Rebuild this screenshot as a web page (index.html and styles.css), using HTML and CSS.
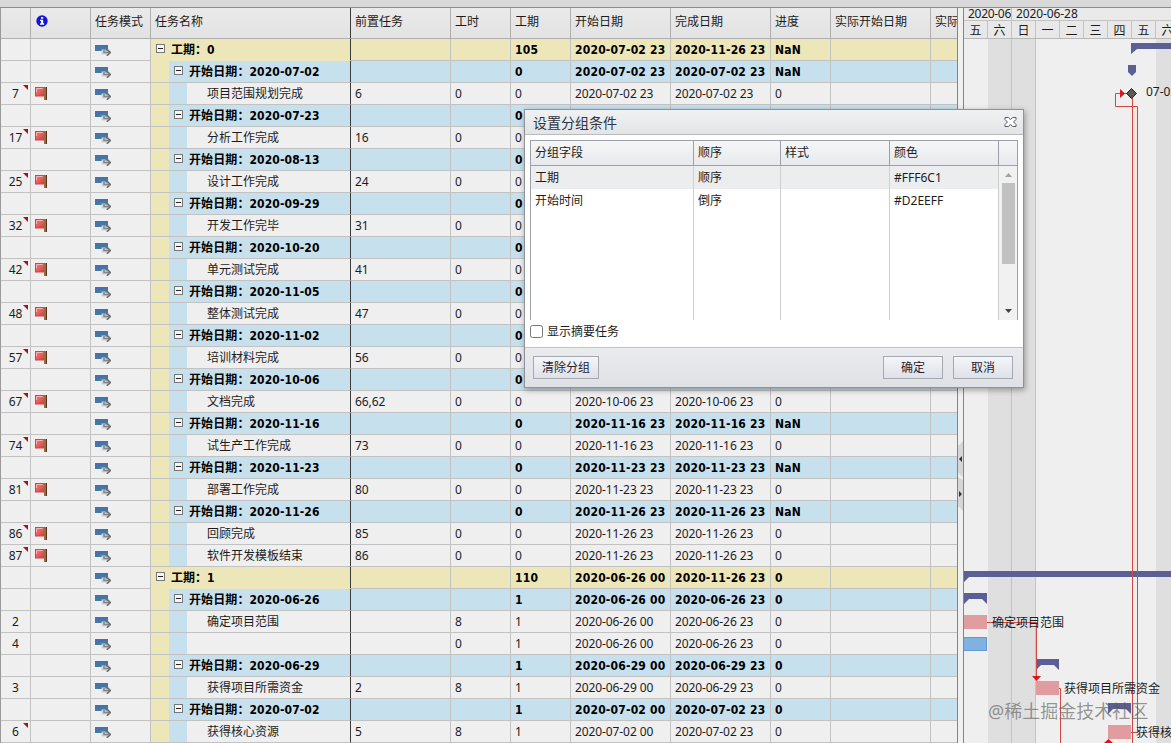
FILE: index.html
```html
<!DOCTYPE html>
<html lang="zh-CN">
  <head>
    <meta charset="UTF-8" />
    <meta name="viewport" content="width=device-width, initial-scale=1.0" />
    <title>甘特图 - 设置分组条件</title>
    <link rel="stylesheet" href="styles.css">
  </head>
  <body>
    <svg class="sprites" width="0" height="0">
      <defs>
        <linearGradient id="barFill" x1="0" y1="0" x2="0" y2="1">
          <stop offset="0" stop-color="#4a6fa5" />
          <stop offset="1" stop-color="#447ba8" />
        </linearGradient>
        <linearGradient id="flagFill" x1="0" y1="0" x2="1" y2="1">
          <stop offset="0" stop-color="#ee8583" />
          <stop offset="1" stop-color="#d8383a" />
        </linearGradient>
      </defs>
      <symbol id="icon-mode" viewBox="0 0 16 12">
        <rect x="0" y="1" width="13" height="6" fill="url(#barFill)" />
        <path d="M8.500 5.500v3h5" fill="none" stroke="#ccd2da" stroke-width="4" />
        <path d="M9 6v2.500h5" fill="none" stroke="#858585" stroke-width="1.500" />
        <path d="M11.800 5.200l3.400 3.300l-3.400 3.300" fill="none" stroke="#707070" stroke-width="1.700" />
      </symbol>
      <symbol id="icon-flag" viewBox="0 0 13 13">
        <rect x="0.500" y="0.500" width="9" height="8.500" fill="url(#flagFill)" stroke="#d04546" />
        <path d="M1.500 5v-3.500h6" fill="none" stroke="#f6b4b2" />
        <rect x="9" y="0" width="3" height="13" fill="#9a6a42" />
        <rect x="11" y="0" width="1" height="13" fill="#5a3418" />
      </symbol>
    </svg>

    <div class="topbar"></div>
    <div class="project">
      <div class="grid">
        <div class="grid-row grid-header">
          <div class="cell"></div>
          <div class="cell cell-info">
            <svg width="12" height="12" viewBox="0 0 12 12">
              <circle cx="6" cy="6" r="5.700" fill="#1212e0" />
              <path d="M5 2h2.200v1.700h-2.200zM4 4.700h3.200v3.600h.9v1.400h-4.100v-1.400h1v-2.200h-1z" fill="#fff" />
            </svg>
          </div>
          <div class="cell">任务模式</div>
          <div class="cell cell-name">任务名称</div>
          <div class="cell">前置任务</div>
          <div class="cell">工时</div>
          <div class="cell">工期</div>
          <div class="cell">开始日期</div>
          <div class="cell">完成日期</div>
          <div class="cell">进度</div>
          <div class="cell">实际开始日期</div>
          <div class="cell">实际完成日期</div>
        </div>
        <div id="gridBody"></div>
      </div>

      <div class="splitter">
        <svg width="5" height="70" viewBox="0 0 5 70">
          <path d="M5 0L0 5v27l5 4z M5 39L0 36v29l5 5z" fill="#d6d6d6" />
          <path d="M4 15v6l-3-3zM1 50v6l3-3z" fill="#333" />
        </svg>
      </div>

      <div class="gantt">
        <div class="weeks">
          <div class="week week-first">2020-06-21</div>
          <div class="week">2020-06-28</div>
        </div>
        <div class="days">
          <div class="day">五</div>
          <div class="day">六</div>
          <div class="day">日</div>
          <div class="day">一</div>
          <div class="day">二</div>
          <div class="day">三</div>
          <div class="day">四</div>
          <div class="day">五</div>
          <div class="day">六</div>
        </div>
        <svg class="chart" width="207" height="704" viewBox="964 39 207 704">
          <!-- weekends -->
          <rect x="988" y="39" width="48" height="704" fill="#dfdfdf" />
          <rect x="1156" y="39" width="15" height="704" fill="#dfdfdf" />
          <path d="M1011.500 39v704M1035.500 39v704" stroke="#c3c3c3" />

          <!-- summaries -->
          <g class="summary">
            <path d="M1131 43h40v6h-34l-6 5z" />
            <path d="M1128 65h8v7l-4 4l-4-4z" />
            <path d="M964 571h207v6h-202l-5 5z" />
            <path d="M964 593h23v11l-5-5h-13l-5 5z" />
            <path d="M1036 659h23v11l-5-5h-13l-5 5z" />
            <path d="M1108 703h23v11l-5-5h-13l-5 5z" />
          </g>

          <!-- links -->
          <rect x="1133" y="107" width="4" height="464" fill="#f9e4df" />
          <g class="link">
            <path d="M1127 93.500h-11.500v13h22V732.500H1131" />
            <path d="M1132.500 98V743" />
            <path d="M987 622.500h49.500V676" />
            <path d="M1059 688.500h1.500V743" />
          </g>
          <path class="arrow" d="M1120 89l5 4.500l-5 4.500zM1032 676h9l-4.500 5zM1104 743l4.500-4l4.500 4z" />

          <!-- tasks -->
          <path d="M1131.500 88.500l5 5l-5 5l-5-5z" fill="#5a5a52" stroke="#222" />
          <g class="task">
            <rect x="964" y="615" width="23" height="14" />
            <rect x="1036" y="681" width="23" height="14" />
            <rect x="1108" y="725" width="23" height="14" />
          </g>
          <rect x="963.500" y="637.500" width="23" height="13" fill="#80b1e0" stroke="#5f9cd6" />

          <text x="1146" y="96">07-02</text>
          <text x="992" y="627">确定项目范围</text>
          <text x="1064" y="693">获得项目所需资金</text>
          <text x="1136" y="737">获得核心资源</text>
          <text class="watermark" x="988" y="718">@稀土掘金技术社区</text>
        </svg>
      </div>
    </div>

    <div class="dialog">
      <div class="dialog-title">
        <span>设置分组条件</span>
        <svg width="13" height="12" viewBox="0 0 13 12">
          <path d="M1 1.500h3.500l2 2.200l2-2.200h3.500v2l-2.500 2.500l2.500 2.500v2h-3.500l-2-2.200l-2 2.200h-3.500v-2l2.500-2.500l-2.500-2.500z" fill="#fff" stroke="#555b66" />
        </svg>
      </div>
      <div class="dialog-body">
        <div class="fields">
          <div class="fields-row fields-header">
            <div>分组字段</div>
            <div>顺序</div>
            <div>样式</div>
            <div>颜色</div>
            <div></div>
          </div>
          <div class="fields-content">
            <div class="fields-rows">
              <div class="fields-row selected">
                <div>工期</div>
                <div>顺序</div>
                <div></div>
                <div>#FFF6C1</div>
              </div>
              <div class="fields-row">
                <div>开始时间</div>
                <div>倒序</div>
                <div></div>
                <div>#D2EEFF</div>
              </div>
              <div class="fields-row fields-empty">
                <div></div>
                <div></div>
                <div></div>
                <div></div>
              </div>
            </div>
            <div class="scrollbar">
              <svg width="17" height="17" viewBox="0 0 17 17"><path d="M5 11h7l-3.500-4z" fill="#a0a0a0" /></svg>
              <div class="scroll-thumb"></div>
              <svg class="scroll-down" width="17" height="17" viewBox="0 0 17 17"><path d="M5 6h7l-3.500 4z" fill="#444" /></svg>
            </div>
          </div>
        </div>
        <label class="check">
          <input type="checkbox" />
          <span>显示摘要任务</span>
        </label>
      </div>
      <div class="dialog-footer">
        <button class="button button-clear">清除分组</button>
        <button class="button">确定</button>
        <button class="button">取消</button>
      </div>
    </div>

    <script>
      // g1: duration group, g2: start date group, t: task
      // type, id, flag, mark, name, predecessor, work, duration, start, finish, progress
      const rows = [
        ["g1", "", 0, 0, "工期：0", "", "", "105", "2020-07-02 23", "2020-11-26 23", "NaN"],
        ["g2", "", 0, 0, "开始日期：2020-07-02", "", "", "0", "2020-07-02 23", "2020-07-02 23", "NaN"],
        ["t", "7", 1, 1, "项目范围规划完成", "6", "0", "0", "2020-07-02 23", "2020-07-02 23", "0"],
        ["g2", "", 0, 0, "开始日期：2020-07-23", "", "", "0", "2020-07-23 23", "2020-07-23 23", "NaN"],
        ["t", "17", 1, 1, "分析工作完成", "16", "0", "0", "2020-07-23 23", "2020-07-23 23", "0"],
        ["g2", "", 0, 0, "开始日期：2020-08-13", "", "", "0", "2020-08-13 23", "2020-08-13 23", "NaN"],
        ["t", "25", 1, 1, "设计工作完成", "24", "0", "0", "2020-08-13 23", "2020-08-13 23", "0"],
        ["g2", "", 0, 0, "开始日期：2020-09-29", "", "", "0", "2020-09-29 23", "2020-09-29 23", "NaN"],
        ["t", "32", 1, 1, "开发工作完毕", "31", "0", "0", "2020-09-29 23", "2020-09-29 23", "0"],
        ["g2", "", 0, 0, "开始日期：2020-10-20", "", "", "0", "2020-10-20 23", "2020-10-20 23", "NaN"],
        ["t", "42", 1, 1, "单元测试完成", "41", "0", "0", "2020-10-20 23", "2020-10-20 23", "0"],
        ["g2", "", 0, 0, "开始日期：2020-11-05", "", "", "0", "2020-11-05 23", "2020-11-05 23", "NaN"],
        ["t", "48", 1, 1, "整体测试完成", "47", "0", "0", "2020-11-05 23", "2020-11-05 23", "0"],
        ["g2", "", 0, 0, "开始日期：2020-11-02", "", "", "0", "2020-11-02 23", "2020-11-02 23", "NaN"],
        ["t", "57", 1, 1, "培训材料完成", "56", "0", "0", "2020-11-02 23", "2020-11-02 23", "0"],
        ["g2", "", 0, 0, "开始日期：2020-10-06", "", "", "0", "2020-10-06 23", "2020-10-06 23", "NaN"],
        ["t", "67", 1, 1, "文档完成", "66,62", "0", "0", "2020-10-06 23", "2020-10-06 23", "0"],
        ["g2", "", 0, 0, "开始日期：2020-11-16", "", "", "0", "2020-11-16 23", "2020-11-16 23", "NaN"],
        ["t", "74", 1, 1, "试生产工作完成", "73", "0", "0", "2020-11-16 23", "2020-11-16 23", "0"],
        ["g2", "", 0, 0, "开始日期：2020-11-23", "", "", "0", "2020-11-23 23", "2020-11-23 23", "NaN"],
        ["t", "81", 1, 1, "部署工作完成", "80", "0", "0", "2020-11-23 23", "2020-11-23 23", "0"],
        ["g2", "", 0, 0, "开始日期：2020-11-26", "", "", "0", "2020-11-26 23", "2020-11-26 23", "NaN"],
        ["t", "86", 1, 1, "回顾完成", "85", "0", "0", "2020-11-26 23", "2020-11-26 23", "0"],
        ["t", "87", 1, 1, "软件开发模板结束", "86", "0", "0", "2020-11-26 23", "2020-11-26 23", "0"],
        ["g1", "", 0, 0, "工期：1", "", "", "110", "2020-06-26 00", "2020-11-26 23", "0"],
        ["g2", "", 0, 0, "开始日期：2020-06-26", "", "", "1", "2020-06-26 00", "2020-06-26 23", "0"],
        ["t", "2", 0, 0, "确定项目范围", "", "8", "1", "2020-06-26 00", "2020-06-26 23", "0"],
        ["t", "4", 0, 0, "", "", "0", "1", "2020-06-26 00", "2020-06-26 23", "0"],
        ["g2", "", 0, 0, "开始日期：2020-06-29", "", "", "1", "2020-06-29 00", "2020-06-29 23", "0"],
        ["t", "3", 0, 0, "获得项目所需资金", "2", "8", "1", "2020-06-29 00", "2020-06-29 23", "0"],
        ["g2", "", 0, 0, "开始日期：2020-07-02", "", "", "1", "2020-07-02 00", "2020-07-02 23", "0"],
        ["t", "6", 0, 1, "获得核心资源", "5", "8", "1", "2020-07-02 00", "2020-07-02 23", "0"],
      ];

      const kinds = { g1: "group-1", g2: "group-2", t: "task-row" };

      document.getElementById("gridBody").innerHTML = rows
        .map(([type, id, flag, mark, name, ...values]) => {
          const toggle = type === "t" ? "" : '<span class="toggle"></span>';
          return `<div class="grid-row ${kinds[type]}">
            <div class="cell cell-id ${mark ? "marked" : ""}">${id}</div>
            <div class="cell cell-flag">${flag ? '<svg width="13" height="13"><use href="#icon-flag" /></svg>' : ""}</div>
            <div class="cell cell-mode"><svg width="16" height="12"><use href="#icon-mode" /></svg></div>
            <div class="cell cell-name">${toggle}<span>${name}</span></div>
            ${values.map((v) => `<div class="cell value">${v}</div>`).join("")}
            <div class="cell value"></div>
            <div class="cell value"></div>
          </div>`;
        })
        .join("");
    </script>
  </body>
</html>
```
FILE: styles.css
```css
* {
  box-sizing: border-box;
}
body {
  margin: 0;
  width: 1171px;
  height: 743px;
  overflow: hidden;
  background-color: #efefef;
  font-family: "Noto Sans", "Noto Sans CJK SC", sans-serif;
  font-size: 12px;
  color: #1c1c1c;
}
.sprites {
  position: absolute;
}
.topbar {
  height: 8px;
  background-color: #d9d9d9;
  border-bottom: 1px solid #8c8c8c;
}
.project {
  display: flex;
  height: 735px;
}

/* task table */
.grid {
  width: 958px;
  flex: none;
  overflow: hidden;
  border-left: 1px solid #9a9a9a;
  border-right: 1px solid #858585;
}
.grid-row {
  display: grid;
  grid-template-columns: 30px 60px 60px 200px 100px 60px 60px 100px 100px 60px 100px 26px;
  height: 22px;
}
.cell {
  display: flex;
  align-items: center;
  padding-left: 4px;
  line-height: 20px;
  white-space: nowrap;
  overflow: hidden;
  border-right: 1px solid #c2c2c2;
  border-bottom: 1px solid #c2c2c2;
}
.cell:last-child {
  border-right: none;
}
.grid-header {
  height: 31px;
  background-image: linear-gradient(#eaeaea, #e2e2e2);
}
.grid-header .cell {
  border-color: #b0b0b0;
  padding-bottom: 3px;
}
.grid-header .cell-info {
  padding-left: 5px;
  padding-bottom: 5px;
}
.grid .cell-name {
  border-right-color: #3c3c3c;
}
.cell-id {
  position: relative;
  justify-content: center;
  padding: 0;
}
.marked::after {
  content: "";
  position: absolute;
  top: 2px;
  right: 2px;
  border-top: 5px solid #a31515;
  border-left: 5px solid transparent;
}
.value {
  letter-spacing: -0.1px;
}
.group-1 .cell-name,
.group-1 .value {
  background-color: #ede6b8;
}
.group-2 .value {
  background-color: #c7e0ee;
}
.group-1 .cell-name,
.group-2 .cell-name,
.group-1 .value,
.group-2 .value {
  font-family: "DejaVu Sans Condensed", "DejaVu Sans", "Noto Sans CJK SC", sans-serif;
  font-stretch: condensed;
  font-weight: bold;
  color: #000;
}
.group-1 .value,
.group-2 .value {
  letter-spacing: 0.2px;
}
.group-1 .cell-name {
  padding-left: 5px;
  border-bottom-color: #ede6b8;
}
.group-2 .cell-name {
  padding-left: 23px;
  background-image: linear-gradient(90deg, #ede6b8 18px, #c7e0ee 18px);
}
.group-2 .cell-name span:last-child {
  letter-spacing: 0.1px;
}
.task-row .cell-name {
  padding-left: 56px;
  background-image: linear-gradient(90deg, #ede6b8 18px, #c7e0ee 18px, #c7e0ee 36px, transparent 36px);
}
.toggle {
  width: 9px;
  height: 9px;
  margin-right: 6px;
  margin-bottom: 2px;
  border: 1px solid #777;
  background: linear-gradient(#222, #222) center / 5px 1px no-repeat #f6f6f6;
}

/* splitter */
.splitter {
  width: 6px;
  flex: none;
  padding-top: 433px;
  background-color: #f0f0f0;
  border-right: 1px solid #858585;
}
.splitter svg {
  display: block;
}

/* gantt */
.gantt {
  width: 207px;
  overflow: hidden;
}
.weeks {
  display: flex;
  height: 13px;
  background-color: #eaeaea;
  border-bottom: 1px solid #c2c2c2;
}
.week {
  flex: 1;
  padding-left: 4px;
  line-height: 11px;
  white-space: nowrap;
  overflow: hidden;
  letter-spacing: -0.1px;
}
.week-first {
  flex: none;
  width: 48px;
  letter-spacing: -0.3px;
  border-right: 1px solid #c2c2c2;
}
.days {
  display: flex;
  height: 18px;
  background-color: #e8e8e8;
  border-bottom: 1px solid #b8b8b8;
}
.day {
  flex: none;
  width: 24px;
  line-height: 20px;
  text-align: center;
  overflow: hidden;
  border-right: 1px solid #c2c2c2;
}
.chart {
  display: block;
}
.chart text {
  fill: #1c1c1c;
}
.link path {
  fill: none;
  stroke: #cf4a44;
}
.arrow {
  fill: #e01414;
}
.summary {
  fill: #5b5f96;
}
.task {
  fill: #e09c9e;
}
.chart .watermark {
  font-size: 18px;
  fill: #555;
  fill-opacity: 0.6;
}

/* group dialog */
.dialog {
  position: absolute;
  left: 524px;
  top: 109px;
  width: 500px;
  height: 279px;
  display: flex;
  flex-direction: column;
  background-color: #fff;
  border: 1px solid #8d9499;
  box-shadow: 1px 2px 6px rgba(0, 0, 0, 0.35);
}
.dialog-title {
  display: flex;
  align-items: center;
  justify-content: space-between;
  height: 25px;
  padding: 0 6px 1px 8px;
  font-size: 14px;
  color: #2e3442;
  background-image: linear-gradient(#f0f1f2, #e2e4e6);
  border-bottom: 1px solid #b9bcbf;
}
.dialog-body {
  flex: 1;
  padding: 5px 5px 0;
}
.fields {
  width: 488px;
  height: 180px;
  border: 1px solid #9ba0aa;
  border-bottom: none;
}
.fields-row {
  display: grid;
  grid-template-columns: 163px 87px 109px 109px 1fr;
  height: 23px;
}
.fields-row > div {
  padding-left: 4px;
  line-height: 23px;
  border-right: 1px solid #cfcfcf;
}
.fields-header {
  height: 25px;
  background-image: linear-gradient(#f5f6f8, #e6e9ed);
}
.fields-header > div {
  line-height: 24px;
  border-right-color: #9ba0aa;
  border-bottom: 1px solid #9ba0aa;
}
.fields-header > div:last-child {
  border-right: none;
}
.fields-content {
  display: flex;
  height: 154px;
}
.fields-rows {
  display: flex;
  flex-direction: column;
  width: 468px;
}
.fields-rows .fields-row {
  grid-template-columns: 163px 87px 109px 109px;
}
.selected {
  background-color: #ecedef;
}
.fields-rows .fields-empty {
  flex: 1;
}
.scrollbar {
  display: flex;
  flex-direction: column;
  width: 18px;
  padding-left: 1px;
  background-color: #f1f1f1;
}
.scroll-thumb {
  width: 13px;
  height: 81px;
  margin-left: 2px;
  background-color: #c1c1c1;
}
.scroll-down {
  margin-top: auto;
}
.check {
  display: flex;
  align-items: center;
  height: 22px;
}
.check input {
  width: 13px;
  height: 13px;
  margin: 0 4px 0 0;
}
.dialog-footer {
  display: flex;
  height: 40px;
  padding: 8px 10px 0 8px;
  gap: 10px;
  background-image: linear-gradient(#eaebed, #dfe1e5);
  border-top: 1px solid #c0c3c6;
}
.button {
  width: 60px;
  height: 23px;
  padding: 0;
  font-family: inherit;
  font-size: 12px;
  line-height: 20px;
  color: #1f2430;
  background-image: linear-gradient(#f4f5f7, #dfe1e9);
  border: 1px solid #a4a8b3;
}
.button-clear {
  width: 66px;
  margin-right: auto;
}
```
